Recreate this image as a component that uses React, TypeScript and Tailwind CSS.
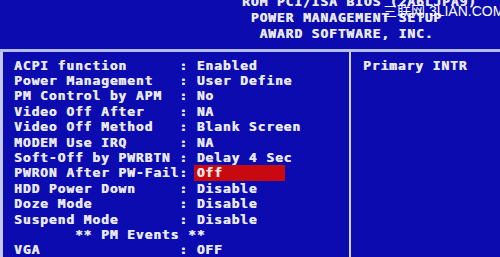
const rows: { label: string; value?: string; selected?: boolean }[] = [
  { label: "ACPI function", value: "Enabled" },
  { label: "Power Management", value: "User Define" },
  { label: "PM Control by APM", value: "No" },
  { label: "Video Off After", value: "NA" },
  { label: "Video Off Method", value: "Blank Screen" },
  { label: "MODEM Use IRQ", value: "NA" },
  { label: "Soft-Off by PWRBTN", value: "Delay 4 Sec" },
  { label: "PWRON After PW-Fail", value: "Off", selected: true },
  { label: "HDD Power Down", value: "Disable" },
  { label: "Doze Mode", value: "Disable" },
  { label: "Suspend Mode", value: "Disable" },
  { label: "       ** PM Events **" },
  { label: "VGA", value: "OFF" },
];

const mono =
  "font-['DejaVu_Sans_Mono','Liberation_Mono',monospace] font-bold text-[13px] tracking-[0.87px] whitespace-pre [text-shadow:0.5px_0_0_currentColor]";

export default function App() {
  return (
    <div className={`w-[500px] h-[257px] overflow-hidden bg-[#0b0bb0] text-[#e8e8f2] ${mono}`}>
      {/* HEADER */}
      <header className="relative h-[49px] overflow-hidden">
        <div className="flex flex-col -mt-[6px] ml-[242px] leading-[16px]">
          <span>ROM PCI/ISA BIOS (2A6LJPA9)</span>
          <span> POWER MANAGEMENT SETUP</span>
          <span>  AWARD SOFTWARE, INC.</span>
        </div>
        <div className="absolute left-[383px] top-[3px] font-['Liberation_Sans',Arial,'Noto_Sans_CJK_SC',sans-serif] font-normal text-[14px] tracking-normal text-white leading-[16px] [text-shadow:none]">
          三联网 3LIAN.COM
        </div>
      </header>

      {/* PANEL */}
      <section className="flex h-[208px] border-t-[3px] border-[#b4bcf0]">
        <div className="w-[349px] shrink-0 border-l-[3px] border-[#c4c8f0] pl-[11px] pt-[5.5px] leading-[15.4px]">
          {rows.map((r) =>
            r.value === undefined ? (
              <div key={r.label}>{r.label}</div>
            ) : (
              <div key={r.label} className="flex">
                <span>{r.label.padEnd(19, " ") + ": "}</span>
                <span className={r.selected ? "w-[91px] -ml-[3px] pl-[3px] bg-[#c80a10] text-[#f4e4e4]" : ""}>{r.value}</span>
              </div>
            )
          )}
        </div>
        <div className="w-[2px] shrink-0 bg-[#d0d4f4]" />
        <div className="flex-1 pl-[12px] pt-[5.5px] leading-[15.4px]">Primary INTR</div>
      </section>
    </div>
  );
}
